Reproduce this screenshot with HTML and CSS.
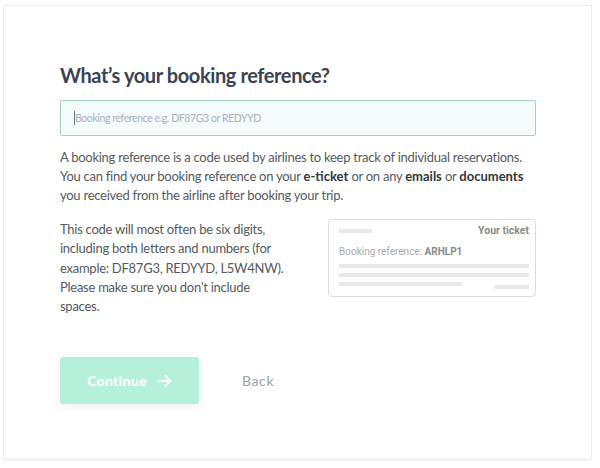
FILE: index.html
```html
<!DOCTYPE html>
<html>
<head>
<meta charset="utf-8">
<link rel="stylesheet" href="styles.css">
</head>
<body>
<div class="card">
  <div class="content">
    <h1 class="title">What’s your booking reference?</h1>
    <div class="input"><span class="caret"></span><span class="placeholder">Booking reference e.g. DF87G3 or REDYYD</span></div>
    <p class="intro">A booking reference is a code used by airlines to keep track of individual reservations. You can find your booking reference on your <b>e-ticket</b> or on any <b>emails</b> or <b>documents</b> you received from the airline after booking your trip.</p>
    <div class="row">
      <p class="hint">This code will most often be six digits, including both letters and numbers (for example: DF87G3, REDYYD, L5W4NW). Please make sure you don’t include spaces.</p>
      <div class="ticket">
        <div class="t-top"><span class="bar bar-s"></span><span class="t-title">Your ticket</span></div>
        <div class="t-ref">Booking reference: <b>ARHLP1</b></div>
        <div class="bar bar-full"></div>
        <div class="bar bar-full"></div>
        <div class="t-last"><span class="bar bar-m"></span><span class="bar bar-r"></span></div>
      </div>
    </div>
    <div class="actions">
      <button class="continue">Continue <svg class="arrow" width="15" height="12" viewBox="0 0 15 12"><path d="M1 6 H13.5 M8.5 1 L13.5 6 L8.5 11" fill="none" stroke="#fff" stroke-width="1.8" stroke-linecap="round" stroke-linejoin="round"/></svg></button>
      <span class="back">Back</span>
    </div>
  </div>
</div>
</body>
</html>
```
FILE: styles.css
```css
html, body {
  margin: 0;
  padding: 0;
  background: #fff;
}
body {
  padding: 5px 8px 8px 3px;
  font-family: "Lato", "Open Sans", sans-serif;
}
.card {
  width: 589px;
  height: 455px;
  border: 1px solid #ececee;
  box-shadow: 0 1px 2px rgba(0,0,0,0.03);
  box-sizing: border-box;
}
.content {
  padding: 56px 55px 0 56px;
  display: flex;
  flex-direction: column;
}
.title {
  margin: 0;
  font-size: 20px;
  line-height: 26px;
  font-weight: 700;
  color: #3b4453;
  letter-spacing: -0.4px;
}
.input {
  margin-top: 12px;
  height: 36px;
  box-sizing: border-box;
  border: 1px solid #9fd2c6;
  border-radius: 2px;
  background: #f5fafb;
  display: flex;
  align-items: center;
  padding-left: 13px;
}
.caret {
  width: 1px;
  height: 14px;
  background: #6f7a84;
}
.placeholder {
  font-size: 10.5px;
  color: #a9b3bb;
  letter-spacing: -0.4px;
}
.intro {
  margin: 12px 0 0;
  font-size: 13px;
  letter-spacing: -0.26px;
  line-height: 19px;
  color: #555a60;
}
b {
  color: #33373c;
  font-weight: 700;
  letter-spacing: 0;
}
.row {
  margin-top: 14px;
  display: flex;
  justify-content: space-between;
  align-items: flex-start;
}
.hint {
  margin: 1px 0 0;
  width: 232px;
  font-size: 13px;
  letter-spacing: -0.26px;
  line-height: 19.3px;
  color: #555a60;
}
.ticket {
  width: 208px;
  box-sizing: border-box;
  border: 1px solid #dcdcdc;
  border-radius: 4px;
  padding: 4px 6px 7px 10px;
  display: flex;
  flex-direction: column;
  font-family: "Roboto", sans-serif;
}
.t-top {
  display: flex;
  justify-content: space-between;
  align-items: center;
  height: 13px;
}
.t-title {
  font-size: 10.5px;
  font-weight: 700;
  color: #8a8a8a;
}
.t-ref {
  margin-top: 8px;
  font-size: 10px;
  line-height: 14px;
  color: #aaaaaa;
}
.t-ref b {
  color: #8a8a8a;
}
.bar {
  display: block;
  height: 4px;
  background: #e9e9e9;
}
.bar-s { width: 33px; }
.bar-full { margin-top: 5px; }
.t-last {
  margin-top: 5px;
  display: flex;
  justify-content: space-between;
  align-items: flex-start;
}
.bar-m { width: 123px; }
.bar-r { width: 35px; margin-top: 3px; }
.actions {
  margin-top: 41px;
  display: flex;
  align-items: center;
}
.continue {
  width: 139px;
  height: 47px;
  border: 0;
  border-radius: 3px;
  background: #b4f0da;
  box-shadow: 0 3px 8px rgba(0,0,0,0.06);
  color: #fff;
  font-family: "Lato", sans-serif;
  font-weight: 900;
  font-size: 14px;
  letter-spacing: 0.3px;
  display: flex;
  align-items: center;
  justify-content: center;
  gap: 10px;
  padding: 0;
}
.arrow { display: block; }
.back {
  margin-left: 43px;
  font-size: 14px;
  color: #9aa2ab;
  letter-spacing: 0.6px;
}
```
